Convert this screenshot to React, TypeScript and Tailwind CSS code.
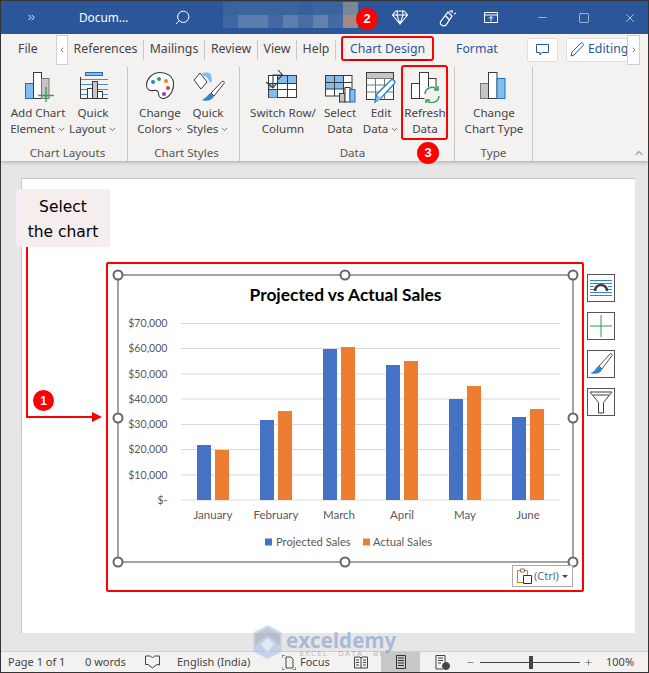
import type { ReactNode } from 'react';
import { ChevronDown, ChevronLeft, ChevronRight, ChevronUp, ChevronsRight, Minus, Plus, Search, Square, X } from 'lucide-react';

const DARK = '#3a3a3a';

const bars = [
  { month: 'January', x: 197, blue: 445, orange: 450 },
  { month: 'February', x: 260, blue: 420, orange: 411 },
  { month: 'March', x: 323, blue: 349, orange: 347 },
  { month: 'April', x: 386, blue: 365, orange: 361 },
  { month: 'May', x: 449, blue: 399, orange: 386 },
  { month: 'June', x: 512, blue: 417, orange: 409 },
];

const ticks = [
  { label: '$70,000', y: 323.5 },
  { label: '$60,000', y: 348.5 },
  { label: '$50,000', y: 374 },
  { label: '$40,000', y: 399 },
  { label: '$30,000', y: 424.5 },
  { label: '$20,000', y: 449.5 },
  { label: '$10,000', y: 475 },
  { label: '$-', y: 500 },
];

const handles = [
  [118, 275], [345, 275], [573, 275],
  [118, 418], [573, 418],
  [118, 562], [345, 562], [573, 562],
];

const mosaic = [
  ['#3a629f', '#3b63a0', '#3b63a0', '#3b63a0', '#3a639f', '#375f9e', '#3b63a0', '#3b63a0', '#7a8799'],
  ['#3f67a2', '#5d7cae', '#5d7cae', '#4468a3', '#5e7daf', '#4a6da5', '#6281b1', '#4469a3', '#a08a85'],
];

function Badge({ n, className }: { n: number; className: string }) {
  return (
    <span className={`absolute flex items-center justify-center rounded-full bg-[#f00] font-['Liberation_Sans',sans-serif] font-bold text-white ${className}`}>
      {n}
    </span>
  );
}

function Icon({ w = 36, h = 34, children }: { w?: number; h?: number; children: ReactNode }) {
  return (
    <svg width={w} height={h} viewBox={`0 0 ${w} ${h}`} fill="none" className="shrink-0">
      {children}
    </svg>
  );
}

function RibbonButton({ icon, lines, caret, className }: { icon: ReactNode; lines: string[]; caret?: boolean; className: string }) {
  return (
    <div className={`flex shrink-0 flex-col items-center ${className}`}>
      <div className="flex h-[38px] items-start justify-center pt-[2px]">{icon}</div>
      <div className="text-center text-[11.6px] leading-[16px] whitespace-nowrap text-[#444]">
        <div>{lines[0]}</div>
        <div className="flex items-center justify-center gap-[2px]">
          {lines[1]}
          {caret && <ChevronDown size={9} strokeWidth={2} className="mt-[1px]" />}
        </div>
      </div>
    </div>
  );
}

function RibbonGroup({ label, className, children }: { label: string; className: string; children: ReactNode }) {
  return (
    <div className={`flex shrink-0 flex-col ${className}`}>
      <div className="flex h-[73px]">{children}</div>
      <div className="mt-[6px] text-center text-[11.6px] leading-[16px] text-[#555]">{label}</div>
    </div>
  );
}

function Tab({ className, children }: { className: string; children: ReactNode }) {
  return (
    <div className={`flex h-[20px] shrink-0 items-center justify-center border-r border-[#c8c8c8] ${className}`}>{children}</div>
  );
}

function AddChartIcon() {
  return (
    <Icon w={32} h={33}>
      <rect x="3.500" y="14.500" width="8" height="15" fill="#83bdee" stroke="#1e6fb5" />
      <rect x="11.500" y="3.500" width="8" height="26" fill="#fff" stroke={DARK} />
      <rect x="19.500" y="9.500" width="7.500" height="20" fill="#c5c5c5" stroke="#777" />
      <path d="M16 26.500h16M24 18v15" stroke="#2ea354" strokeWidth="1.400" />
    </Icon>
  );
}

function QuickLayoutIcon() {
  return (
    <Icon w={31} h={33}>
      <rect x="7.500" y="3.500" width="17" height="3" fill="#83bdee" stroke="#1e6fb5" />
      <path d="M2 10.500h28M2 15.500h28M2 20.500h28M2 25.500h28" stroke="#4a90cf" />
      <path d="M2.500 8v21.500H30" stroke={DARK} />
      <rect x="9.500" y="19.500" width="5" height="10" fill="#fff" stroke={DARK} />
      <rect x="14.500" y="12.500" width="5" height="17" fill="#c5c5c5" stroke={DARK} />
      <rect x="19.500" y="22.500" width="5" height="7" fill="#fff" stroke={DARK} />
    </Icon>
  );
}

function PaletteIcon() {
  return (
    <Icon w={32} h={33}>
      <path d="M15 3.500c8-.5 14 4 14.500 10.500.5 6-2.500 13-8 15-4 1.500-7-1-7-4.500 0-3-2-3.500-4.500-3-4 .500-7.500-1-7.500-5C2.500 10 8 4 15 3.500z" fill="#fff" stroke={DARK} strokeWidth="1.100" />
      <circle cx="9" cy="13" r="2" fill="#2c86d1" />
      <circle cx="15" cy="10" r="2" fill="#2ea354" />
      <circle cx="22" cy="12" r="2" fill="#e8831f" />
      <circle cx="24" cy="19" r="2" fill="#e8343d" />
      <circle cx="20" cy="25" r="2" fill="#8e3fa8" />
    </Icon>
  );
}

function QuickStylesIcon() {
  return (
    <Icon w={34} h={33}>
      <path d="M3 11l6-7 7 9-6 7z" fill="#fff" stroke={DARK} />
      <path d="M11 4.500c3-1.500 7-1.500 9 1l1 7-2.500 1c0-3-3-6-6.500-7z" fill="#83bdee" />
      <path d="M20 24L31 12.500c1-1 3 .500 2 2L23 27z" fill="#fff" stroke={DARK} />
      <path d="M19 24c-2 2-4 5-8 7 3 1.500 10 1 12-4z" fill="#2c86d1" />
    </Icon>
  );
}

function SwitchIcon() {
  return (
    <Icon w={34} h={32}>
      <rect x="2.500" y="6.500" width="28" height="22" fill="#fff" stroke={DARK} />
      <path d="M11 7h19v7H11z" fill="#83bdee" />
      <path d="M3 14h8L3 20z" fill="#83bdee" />
      <path d="M3 20.500h8v8H3z" fill="#83bdee" />
      <path d="M2.500 14.500h28M2.500 20.500h28M11.500 6.500v22M21.500 6.500v22" stroke={DARK} />
      <path d="M0 13l7 6 5-6M7 18V6h9M12 1l4.500 5-4.500 4.500" fill="none" stroke={DARK} strokeWidth="1.100" />
    </Icon>
  );
}

function SelectDataIcon() {
  return (
    <Icon w={32} h={34}>
      <rect x="1.500" y="6.500" width="26.500" height="20.500" fill="#fff" stroke={DARK} />
      <path d="M2 7h17.500v13H2z" fill="#83bdee" />
      <path d="M1.500 13.500H28M1.500 20H28M10.500 6.500V27M19.500 6.500V27" stroke={DARK} />
      <rect x="15.500" y="24.500" width="5.500" height="8.500" fill="#c5c5c5" stroke={DARK} />
      <rect x="21" y="18.500" width="5" height="14.500" fill="#fff" stroke={DARK} />
      <rect x="26" y="20.500" width="5" height="12.500" fill="#83bdee" stroke="#1e6fb5" />
    </Icon>
  );
}

function EditDataIcon() {
  return (
    <Icon w={34} h={34}>
      <rect x="2.500" y="3.500" width="27" height="27" fill="#fff" stroke={DARK} />
      <rect x="3" y="4" width="26" height="5" fill="#c5c5c5" />
      <path d="M2.500 9.500h27M2.500 16h27M2.500 23h27M11.500 9.500v21M20.500 9.500v21" stroke="#777" />
      <path d="M11 33l2-8L27 11c2-1.500 5 1.500 3 4L17 29z" fill="#fff" stroke="#2c86d1" strokeWidth="1.500" />
      <path d="M12 32l1.500-6 4 3.500z" fill="#83bdee" />
    </Icon>
  );
}

function RefreshIcon() {
  return (
    <Icon w={32} h={34}>
      <rect x="2.500" y="14.500" width="8" height="15" fill="#fff" stroke={DARK} />
      <rect x="10.500" y="3.500" width="9" height="26" fill="#fff" stroke={DARK} />
      <rect x="19.500" y="9.500" width="7.500" height="20" fill="#fff" stroke={DARK} />
      <circle cx="23" cy="26" r="8.500" fill="#f3f2f1" />
      <path d="M16 25a7 7 0 0 1 12-4.500M30 27a7 7 0 0 1-12 4.500" stroke="#2ea354" strokeWidth="1.500" fill="none" />
      <path d="M29 17v4h-4M17 34.500v-3.500h4" stroke="#2ea354" strokeWidth="1.500" fill="none" />
    </Icon>
  );
}

function ChangeTypeIcon() {
  return (
    <Icon w={28} h={33}>
      <rect x="0.500" y="14.500" width="8" height="15" fill="#c5c5c5" stroke="#777" />
      <rect x="8.500" y="3.500" width="8.500" height="26" fill="#fff" stroke={DARK} />
      <rect x="17" y="9.500" width="8" height="20" fill="#83bdee" stroke="#1e6fb5" />
    </Icon>
  );
}

function Chart() {
  return (
    <svg viewBox="106 262 478 330" width="478" height="330" className="-m-[2px] block font-['Lato',sans-serif]">
      {ticks.map((t) => (
        <g key={t.label}>
          <line x1="181" x2="560" y1={t.y} y2={t.y} stroke="#d9d9d9" />
          <text x="167.500" y={t.y + 3.500} textAnchor="end" fontSize="10.600" fill="#595959">{t.label}</text>
        </g>
      ))}
      {bars.map((b) => (
        <g key={b.month}>
          <rect x={b.x} y={b.blue} width="14" height={500 - b.blue} fill="#4472c4" />
          <rect x={b.x + 18} y={b.orange} width="14" height={500 - b.orange} fill="#ed7d31" />
          <text x={b.x + 16} y="519" textAnchor="middle" fontSize="11.500" fill="#595959">{b.month}</text>
        </g>
      ))}
      <text x="345.500" y="301" textAnchor="middle" fontSize="17.400" fontWeight="700" fill="#000">Projected vs Actual Sales</text>
      <rect x="265" y="538.500" width="7" height="7" fill="#4472c4" />
      <text x="276" y="546" fontSize="11.200" fill="#595959">Projected Sales</text>
      <rect x="363" y="538.500" width="7" height="7" fill="#ed7d31" />
      <text x="373" y="546" fontSize="11.200" fill="#595959">Actual Sales</text>
      <rect x="118" y="275" width="455" height="287" fill="none" stroke="#666" strokeWidth="1.200" />
      {handles.map(([x, y]) => (
        <circle key={`${x}-${y}`} cx={x} cy={y} r="4.500" fill="#fff" stroke="#666" strokeWidth="2" />
      ))}
    </svg>
  );
}

function SideButton({ children }: { children: ReactNode }) {
  return <div className="flex size-[28px] items-center justify-center border border-[#555] bg-white">{children}</div>;
}

export default function App() {
  return (
    <div className="relative flex h-[673px] w-[649px] flex-col overflow-hidden border border-[#333] bg-[#e6e6e6] font-['Noto_Sans',sans-serif]">
      {/* Title bar */}
      <div className="flex h-[33px] shrink-0 items-center bg-[#2b579a] text-white">
        <ChevronsRight size={11} strokeWidth={2} className="ml-[25px]" />
        <span className="ml-[42px] w-[70px] text-[11.800px]">Docum...</span>
        <Search size={17} strokeWidth={1.400} className="ml-[25px] -scale-x-100" />
        <div className="ml-[32px] flex h-[27px] w-[135px] shrink-0 flex-col self-start pt-[1px]">
          {mosaic.map((row, i) => (
            <div key={i} className="flex flex-1">
              {row.map((c, j) => (
                <div key={j} className="flex-1" style={{ backgroundColor: c }} />
              ))}
            </div>
          ))}
        </div>
        <svg width="16" height="15" viewBox="0 0 16 15" fill="none" stroke="#fff" strokeWidth="1.100" className="ml-[34px] shrink-0">
          <path d="M4 1h8l3.500 4L8 14 .5 5zM.5 5h15M5.500 1L5 5l3 9 3-9-.5-4" />
        </svg>
        <svg width="17" height="18" viewBox="0 0 17 18" fill="none" stroke="#fff" strokeWidth="1.200" className="ml-[31px] shrink-0">
          <path d="M9 3l4 4-6 9c-1 1-3 1-4.500 0S1 13 2 12zM6.500 6.500l3.500 4M13 1v3M15 5l2-1M11 1.500l.5 1.500" />
        </svg>
        <svg width="14" height="13" viewBox="0 0 14 13" fill="none" stroke="#fff" className="ml-[28px] shrink-0">
          <path d="M.5 1.500h13v10H.5zM.5 4h13M7 10.500V5.500M5 7.500l2-2 2 2" />
        </svg>
        <Minus size={13} strokeWidth={1} className="ml-[38px] shrink-0" />
        <Square size={12} strokeWidth={1.100} className="ml-[29px] shrink-0" />
        <X size={14} strokeWidth={1.100} className="ml-[33px] shrink-0" />
      </div>

      {/* Tabs */}
      <div className="flex h-[31px] shrink-0 items-center bg-[#f3f2f1] text-[12.300px] whitespace-nowrap text-[#444]">
        <span className="ml-[17px] w-[38px] shrink-0">File</span>
        <div className="flex h-[30px] w-[12px] shrink-0 items-center justify-center border border-[#cfcfcf] bg-white">
          <ChevronLeft size={8} strokeWidth={3} className="text-[#777]" />
        </div>
        <Tab className="w-[76px]">References</Tab>
        <Tab className="w-[61px]">Mailings</Tab>
        <Tab className="w-[53px]">Review</Tab>
        <Tab className="w-[39px]">View</Tab>
        <Tab className="w-[39px]">Help</Tab>
        <span className="ml-[14px] w-[106px] shrink-0 text-[#2b579a]">Chart Design</span>
        <span className="w-[71px] shrink-0 text-[#2b579a]">Format</span>
        <div className="flex h-[24px] w-[31px] shrink-0 items-center justify-center rounded-[2px] border border-[#e1dfdd] bg-white">
          <svg width="13" height="12" viewBox="0 0 13 12" fill="none" stroke="#2b579a">
            <path d="M.5.500h12v8H6L4 11V8.500H.5z" />
          </svg>
        </div>
        <div className="ml-[8px] flex h-[24px] w-[62px] shrink-0 items-center gap-[3px] overflow-hidden rounded-[2px] border border-[#e1dfdd] bg-white pl-[3px] text-[#2b579a]">
          <svg width="15" height="15" viewBox="0 0 15 15" fill="none" stroke="#2b579a" className="shrink-0">
            <path d="M1 14l1-4L11 1c1-1 3 1 2 2.500L4 13z" />
          </svg>
          Editing
        </div>
        <div className="ml-[-1px] flex h-[30px] w-[13px] shrink-0 items-center justify-center border border-[#cfcfcf] bg-white">
          <ChevronRight size={8} strokeWidth={3} className="text-[#777]" />
        </div>
      </div>

      {/* Ribbon */}
      <div className="relative flex h-[96px] shrink-0 bg-[#f3f2f1] pt-[2px] shadow-[0_2px_3px_rgba(0,0,0,0.2)]">
        <RibbonGroup label="Chart Layouts" className="w-[127px] border-r border-[#c6c6c6] pl-[7px]">
          <RibbonButton icon={<AddChartIcon />} lines={['Add Chart', 'Element']} caret className="w-[60px]" />
          <RibbonButton icon={<QuickLayoutIcon />} lines={['Quick', 'Layout']} caret className="w-[50px]" />
        </RibbonGroup>
        <RibbonGroup label="Chart Styles" className="w-[112px] border-r border-[#c6c6c6] pl-[6px]">
          <RibbonButton icon={<PaletteIcon />} lines={['Change', 'Colors']} caret className="w-[52px]" />
          <RibbonButton icon={<QuickStylesIcon />} lines={['Quick', 'Styles']} caret className="w-[44px]" />
        </RibbonGroup>
        <RibbonGroup label="Data" className="w-[215px] border-r border-[#c6c6c6] pl-[11px]">
          <RibbonButton icon={<SwitchIcon />} lines={['Switch Row/', 'Column']} className="w-[64px]" />
          <RibbonButton icon={<SelectDataIcon />} lines={['Select', 'Data']} className="w-[50px]" />
          <RibbonButton icon={<EditDataIcon />} lines={['Edit', 'Data']} caret className="w-[32px]" />
          <RibbonButton icon={<RefreshIcon />} lines={['Refresh', 'Data']} className="ml-[6px] w-[44px]" />
        </RibbonGroup>
        <RibbonGroup label="Type" className="w-[78px] border-r border-[#c6c6c6]">
          <RibbonButton icon={<ChangeTypeIcon />} lines={['Change', 'Chart Type']} className="w-[78px]" />
        </RibbonGroup>
        <ChevronUp size={12} strokeWidth={1.500} className="absolute right-[3px] bottom-[2px] text-[#333]" />
      </div>

      {/* Document */}
      <div className="flex flex-1 flex-col pt-[17px] pr-[13px] pb-[18px] pl-[20px]">
        <div className="flex flex-1 items-start border-t border-l border-[#c6c6c6] bg-white pt-[83px] pl-[84px]">
          <div className="relative h-[330px] w-[478px] shrink-0 rounded-[2px] border-2 border-[#f00]">
            <Chart />
            <div className="absolute right-[9px] bottom-[3px] flex h-[22px] w-[61px] items-center gap-[2px] border border-[#aaa] bg-white pl-[4px] text-[11px] text-[#5a6a85]">
              <svg width="15" height="16" viewBox="0 0 15 16" fill="none" className="shrink-0">
                <path d="M.5 2.500h10v12H.5z" stroke="#d97a10" />
                <path d="M3.500 1h4v3h-4z" stroke="#777" fill="#fff" />
                <path d="M6.500 7.500h8v8h-8z" stroke="#333" fill="#fff" />
              </svg>
              (Ctrl)
              <svg width="6" height="3" viewBox="0 0 6 3" className="ml-[1px]">
                <path d="M0 0h6L3 3z" fill="#444" />
              </svg>
            </div>
          </div>
          <div className="ml-[3px] flex flex-col gap-[10px] pt-[12px]">
            <SideButton>
              <svg width="22" height="20" viewBox="0 0 22 20" fill="none">
                <path d="M0 2.500h22M0 5.500h22M0 14.500h22M0 17.500h22M0 8.500h4M18 8.500h4M0 11.500h4M18 11.500h4" stroke="#2c86d1" />
                <path d="M5 13c0-8 12-8 12 0" stroke="#404040" strokeWidth="2.600" />
              </svg>
            </SideButton>
            <SideButton>
              <svg width="22" height="22" viewBox="0 0 22 22" fill="none" stroke="#2e9a4f">
                <path d="M0 11h22M11 0v22" />
              </svg>
            </SideButton>
            <SideButton>
              <svg width="24" height="24" viewBox="0 0 24 24" fill="none">
                <path d="M10 14L21 2c1-1 2.500 0 2 1.500L13 17z" fill="#fff" stroke="#555" />
                <path d="M9 14c-2 2-3 6-8 7 3 1.500 11 1.500 12-4z" fill="#2c86d1" />
              </svg>
            </SideButton>
            <SideButton>
              <svg width="24" height="24" viewBox="0 0 24 24" fill="none" stroke="#404040">
                <path d="M1 2h22L14.500 12.500V23h-5V12.500zM4 5h16" />
              </svg>
            </SideButton>
          </div>
        </div>
      </div>

      {/* Status bar */}
      <div className="flex h-[21px] shrink-0 items-center border-t border-[#cfcfcf] bg-[#f3f2f1] text-[11px] text-[#444]">
        <span className="ml-[7px] w-[77px] shrink-0">Page 1 of 1</span>
        <span className="w-[60px] shrink-0">0 words</span>
        <svg width="15" height="14" viewBox="0 0 15 14" fill="none" stroke="#444" className="shrink-0">
          <path d="M.5 1h5L7.500 3l2-2h5v9L12 9.500 7.500 13 3 9.500H.5z" />
        </svg>
        <span className="ml-[17px] w-[105px] shrink-0">English (India)</span>
        <svg width="14" height="15" viewBox="0 0 14 15" fill="none" stroke="#444" className="shrink-0">
          <path d="M0 3V0h3M0 12v3h3M14 12v3h-3M4 13V2h5l2 2v9z" />
        </svg>
        <span className="ml-[4px] w-[54px] shrink-0">Focus</span>
        <svg width="14" height="13" viewBox="0 0 14 13" fill="none" stroke="#444" className="shrink-0">
          <path d="M.5 1h5.500l1 1 1-1h5.500v11H.5zM7 2v10M2 4h3M2 6.500h3M2 9h3M9 4h3M9 6.500h3M9 9h3" />
        </svg>
        <div className="ml-[13px] flex h-[20px] w-[39px] shrink-0 items-center justify-center bg-[#c8c8c8]">
          <svg width="10" height="14" viewBox="0 0 10 14" fill="none" stroke="#333">
            <path d="M.5.500h9v13h-9zM2 3h6M2 5.500h6M2 8h6M2 10.500h6" />
          </svg>
        </div>
        <svg width="15" height="15" viewBox="0 0 15 15" fill="none" stroke="#444" className="ml-[15px] shrink-0">
          <path d="M8 14H1V.5h9V7M3 3h5M3 5.500h5M3 8h3" />
          <circle cx="11" cy="11" r="3.500" fill="#444" />
        </svg>
        <Minus size={9} strokeWidth={1.500} className="ml-[16px] shrink-0" />
        <div className="relative ml-[5px] h-[1px] w-[100px] shrink-0 bg-[#444]">
          <div className="absolute top-[-6px] left-[49px] h-[13px] w-[4px] bg-[#444]" />
        </div>
        <Plus size={9} strokeWidth={1.500} className="ml-[4px] shrink-0" />
        <span className="ml-[13px]">100%</span>
      </div>

      {/* Annotations */}
      <div className="absolute top-[188px] left-[15px] flex h-[58px] w-[94px] items-center justify-center rounded-[2px] border border-[#fbe6fb] bg-[#f5eeee] pt-[3px] text-center font-['DejaVu_Sans',sans-serif] text-[15.500px] leading-[25px] text-black">
        <div>
          Select
          <br />
          the chart
        </div>
      </div>
      <div className="absolute top-[246px] left-[25px] h-[171px] w-[74px] border-b-2 border-l-2 border-[#f00]" />
      <div className="absolute top-[411px] left-[91px] size-0 border-y-[5px] border-l-[10px] border-y-transparent border-l-[#f00]" />
      <Badge n={1} className="top-[389px] left-[32px] size-[21px] text-[12px]" />
      <Badge n={2} className="top-[7px] left-[355px] size-[22px] text-[13px]" />
      <Badge n={3} className="top-[141px] left-[416px] size-[22px] text-[13px]" />
      <div className="absolute top-[35px] left-[340px] h-[25px] w-[93px] rounded-[3px] border-2 border-[#f00]" />
      <div className="absolute top-[58px] left-[349px] h-[2px] w-[78px] bg-[#c00]" />
      <div className="absolute top-[64px] left-[400px] h-[75px] w-[47px] rounded-[3px] border-2 border-[#f00]" />

      {/* Watermark */}
      <div className="absolute top-[624px] left-[252px] flex items-start gap-[4px] text-[#4472c4]/40">
        <svg width="29" height="34" viewBox="0 0 30 36" className="opacity-60">
          <path d="M15 0l15 8v20l-15 8-15-8V8z" fill="#a9c0e8" />
          <path d="M15 3l13 7v12l-6-6-7-5-7 5-6 6V10z" fill="#9aa3b5" />
          <path d="M15 14l7 6-7 9-7-9z" fill="#e3e9f5" />
        </svg>
        <div className="mt-[5px] flex flex-col items-center font-['Open_Sans',sans-serif]">
          <span className="text-[20.600px] leading-[20px] font-bold">exceldemy</span>
          <span className="text-[8px] leading-[6px] tracking-[1.200px] text-[#888]/60">EXCEL · DATA · BI</span>
        </div>
      </div>
    </div>
  );
}
